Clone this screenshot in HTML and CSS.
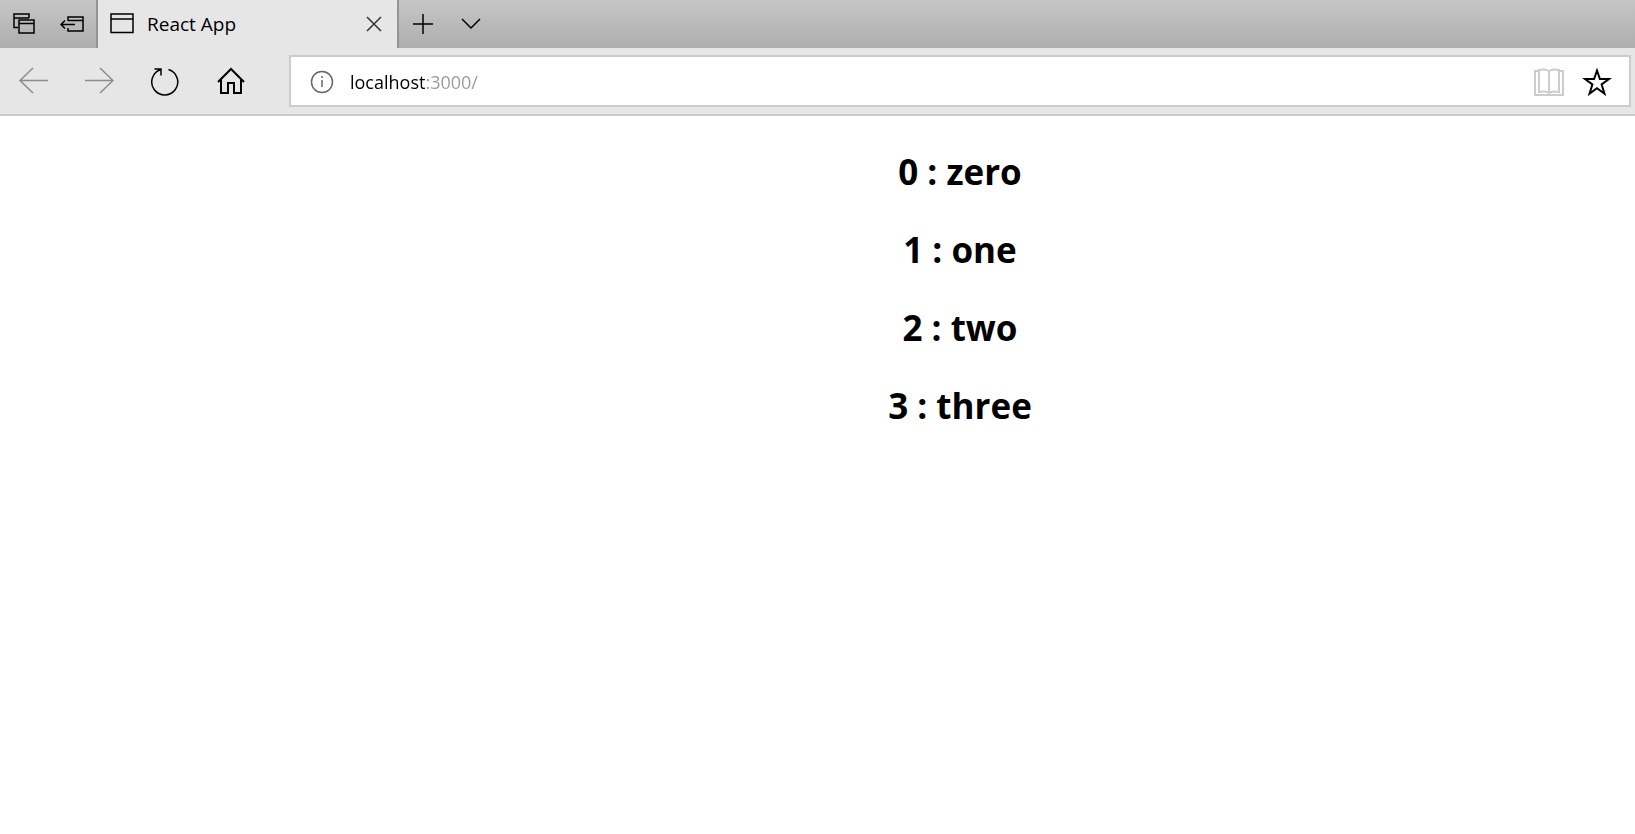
FILE: index.html
```html
<!DOCTYPE html>
<html lang="en">
<head>
<meta charset="utf-8">
<title>React App</title>
<link rel="stylesheet" href="styles.css">
</head>
<body>
<header class="browser">
  <div class="tab-strip">
    <button class="strip-button" type="button" aria-label="Tabs you've set aside">
      <svg class="icon" width="24" height="24" viewBox="0 0 24 24"><path d="M6 15.500H2V2h15v4M2 6h15M7 8v13h15V8zM7 11.500h15"/></svg>
    </button>
    <button class="strip-button" type="button" aria-label="Set these tabs aside">
      <svg class="icon" width="24" height="24" viewBox="0 0 24 24"><path d="M8 9V5h15v14H8v-3M8 8.500h15M1 12.500h14M5 8.500l-4 4 4 4"/></svg>
    </button>
    <div class="tab">
      <svg class="icon" width="24" height="24" viewBox="0 0 24 24"><path d="M1 2h22v18.500H1zM1 7h22"/></svg>
      <span class="tab-title">React App</span>
      <button class="tab-close" type="button" aria-label="Close tab">
        <svg class="icon" width="16" height="16" viewBox="0 0 16 16"><path d="M1 1l14 14M15 1L1 15"/></svg>
      </button>
    </div>
    <button class="strip-button" type="button" aria-label="New tab">
      <svg class="icon" width="20" height="20" viewBox="0 0 20 20"><path d="M0 10h20M10 0v20"/></svg>
    </button>
    <button class="strip-button" type="button" aria-label="Show tab previews">
      <svg class="icon" width="20" height="20" viewBox="0 0 20 20"><path d="M1 5l9 9 9-9"/></svg>
    </button>
  </div>
  <div class="toolbar">
    <nav class="nav-buttons">
      <button class="nav-button" type="button" aria-label="Back" disabled>
        <svg class="icon" width="30" height="28" viewBox="0 0 30 28"><path d="M2 13.500h28M15 1L2 13.500 15 26"/></svg>
      </button>
      <button class="nav-button" type="button" aria-label="Forward" disabled>
        <svg class="icon" width="30" height="28" viewBox="0 0 30 28"><path d="M1 13.500h28M16 1l13 12.500L16 26"/></svg>
      </button>
      <button class="nav-button" type="button" aria-label="Refresh">
        <svg class="icon" width="30" height="30" viewBox="0 0 30 30"><path d="M18.500 3.500A13 13 0 1 1 11 3.500M4.500 3H11v6.500"/></svg>
      </button>
      <button class="nav-button" type="button" aria-label="Home">
        <svg class="icon home" width="30" height="28" viewBox="0 0 30 28"><path d="M2 15L15 2l13 13M5 12.500V26h7V16h6v10h7V12.500"/></svg>
      </button>
    </nav>
    <form class="address-bar">
      <button class="info-button" type="button" aria-label="Website information">
        <svg class="icon info" width="24" height="24" viewBox="0 0 24 24"><circle cx="12" cy="12" r="10.500"/><path d="M12 10v7M12 6v2"/></svg>
      </button>
      <input class="address" type="text" aria-label="Address" value="localhost:3000/" spellcheck="false">
      <button class="address-button" type="button" aria-label="Reading view" disabled>
        <svg class="icon book" width="30" height="28" viewBox="0 0 30 28"><path d="M5 3H1v24h28V3h-4M15 3C12 1 9 1 5 2v22c4-1 7-1 10 1 3-2 6-2 10-1V2c-4-1-7-1-10 1zM15 3v22"/></svg>
      </button>
      <button class="address-button" type="button" aria-label="Add to favorites">
        <svg class="icon star" width="30" height="30" viewBox="0 0 30 30"><path d="M15 3.500l2.900 8.500h9.100l-7.400 5.500 2.900 9.200L15 21.300l-7.500 5.400 2.900-9.200L3 12h9.100z"/></svg>
      </button>
    </form>
  </div>
</header>
<main class="page">
  <h1 class="entry">0 : zero</h1>
  <h1 class="entry">1 : one</h1>
  <h1 class="entry">2 : two</h1>
  <h1 class="entry">3 : three</h1>
</main>
</body>
</html>
```
FILE: styles.css
```css
* {
  box-sizing: border-box;
}

body {
  margin: 0;
  background: #fff;
  color: #000;
  font-family: "Open Sans", "Noto Sans", sans-serif;
  overflow-x: hidden;
}

button {
  display: flex;
  align-items: center;
  justify-content: center;
  flex: none;
  padding: 0;
  border: 0;
  background: none;
  color: #000;
}

.icon {
  flex: none;
  fill: none;
  stroke: currentColor;
  stroke-width: 1.5;
}

.tab-strip {
  display: flex;
  height: 48px;
  background: linear-gradient(#c6c6c6, #aeaeae);
}

.strip-button {
  width: 48px;
}

.tab {
  display: flex;
  align-items: center;
  gap: 13px;
  width: 303px;
  padding: 0 11px 0 12px;
  border: solid #949494;
  border-width: 0 2px;
  background: #e6e6e6;
}

.tab-title {
  flex: 1;
  font-size: 19px;
  line-height: 24px;
}

.tab-close {
  width: 24px;
  height: 24px;
  color: #333;
}

.toolbar {
  display: flex;
  gap: 25px;
  padding: 7px 4px 7px 0;
  border-bottom: 2px solid #ccc;
  background: #e6e6e6;
}

.nav-buttons {
  display: flex;
}

.nav-button {
  width: 66px;
}

.nav-button:disabled {
  color: #8c8c8c;
}

.home,
.book,
.star {
  stroke-width: 2;
}

.address-bar {
  display: flex;
  align-items: center;
  flex: 1;
  height: 52px;
  padding: 1px 8px 0 19px;
  border: 2px solid #ccc;
  background: #fff;
}

.info-button {
  width: 24px;
  height: 24px;
  margin-right: 16px;
  color: #666;
}

.address {
  flex: 1;
  min-width: 0;
  padding: 0;
  border: 0;
  outline: 0;
  background: linear-gradient(90deg, #000 76px, #999 76px);
  background-clip: text;
  -webkit-background-clip: text;
  -webkit-text-fill-color: transparent;
  font: 18px/28px "Open Sans", "Noto Sans", sans-serif;
}

.address-button {
  width: 48px;
  height: 47px;
}

.address-button:disabled {
  color: #ccc;
}

.page {
  display: flex;
  flex-direction: column;
  gap: 30px;
  padding: 32px 0 0 285px;
  text-align: center;
}

.entry {
  margin: 0;
  font-size: 35px;
  line-height: 48px;
  font-weight: 700;
}
```
